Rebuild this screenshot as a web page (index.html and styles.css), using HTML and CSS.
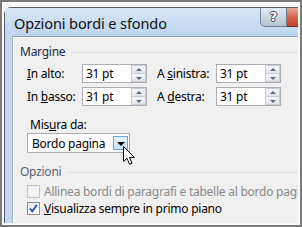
FILE: index.html
```html
<!DOCTYPE html>
<html>
<head>
<meta charset="utf-8">
<link rel="stylesheet" href="styles.css">
</head>
<body>
<div class="screen">
  <div class="clip">
    <div class="window">
      <div class="titlebar">
        <span class="title">Opzioni bordi e sfondo</span>
        <div class="caption-btns">
          <div class="btn-help">?</div>
          <div class="btn-close">x</div>
        </div>
      </div>
      <div class="client">
        <div class="group-head"><span>Margine</span><i class="rule"></i></div>
        <div class="margins">
          <label class="lbl"><u>I</u>n alto:</label>
          <div class="spin"><span class="val">31 pt</span><div class="spin-btns"><b class="up"></b><b class="down"></b></div></div>
          <label class="lbl lbl-right">A <u>s</u>inistra:</label>
          <div class="spin"><span class="val">31 pt</span><div class="spin-btns"><b class="up"></b><b class="down"></b></div></div>
          <label class="lbl">In <u>b</u>asso:</label>
          <div class="spin"><span class="val">31 pt</span><div class="spin-btns"><b class="up"></b><b class="down"></b></div></div>
          <label class="lbl lbl-right">A <u>d</u>estra:</label>
          <div class="spin"><span class="val">31 pt</span><div class="spin-btns"><b class="up"></b><b class="down"></b></div></div>
        </div>
        <div class="measure">
          <label class="measure-lbl">Mis<u>u</u>ra da:</label>
          <div class="select">
            <span class="val">Bordo pagina</span>
            <div class="drop"><b class="tri"></b></div>
            <svg class="cursor" width="13" height="20" viewBox="0 0 13 20">
              <path d="M0.5 0.5 L0.5 15.5 L4 12.2 L6.6 18.3 L9 17.3 L6.5 11.4 L11.3 11.4 Z" fill="#fff" stroke="#000" stroke-width="1" stroke-linejoin="miter"/>
            </svg>
          </div>
        </div>
        <div class="group-head group-opts"><span>Opzioni</span><i class="rule"></i></div>
        <div class="check disabled"><span class="box"></span><span class="ctext">Allinea bordi di paragrafi e tabelle al bordo pagina</span></div>
        <div class="check"><span class="box checked">
          <svg width="11" height="11" viewBox="0 0 11 11"><path d="M2 5.5 L4.3 8.3 L9 1.8" fill="none" stroke="#2a4fa8" stroke-width="1.8"/></svg>
        </span><span class="ctext"><u>V</u>isualizza sempre in primo piano</span></div>
      </div>
    </div>
  </div>
</div>
</body>
</html>
```
FILE: styles.css
```css
html, body {
  margin: 0;
  padding: 0;
}
body {
  width: 302px;
  height: 227px;
  overflow: hidden;
  font-family: "Noto Sans", "Open Sans", sans-serif;
  font-size: 12px;
  letter-spacing: -0.25px;
  color: #000;
}
.screen {
  box-sizing: border-box;
  width: 302px;
  height: 227px;
  border: 2px solid #7a7a7a;
  background: #fbfbfb;
  padding: 5px 2px 2px 2px;
}
.clip {
  width: 100%;
  height: 100%;
  overflow: hidden;
}
.window {
  width: 330px;
  height: 240px;
  box-sizing: border-box;
  border: 1px solid #565d66;
  border-top-left-radius: 7px;
  background: linear-gradient(to right, #c2d7ed, #d3e3f4 40%, #c4d9ef);
  padding: 0 0 0 7px;
}
.titlebar {
  height: 28px;
  display: flex;
  align-items: flex-start;
  margin-left: -7px;
  padding-left: 9px;
  background: linear-gradient(to bottom, #d9e7f6 0%, #cadff4 45%, #bed5ee 100%);
}
.title {
  font-size: 14.5px;
  line-height: 14px;
  margin-top: 8px;
  color: #101010;
  letter-spacing: -0.1px;
}
.caption-btns {
  margin-left: auto;
  display: flex;
  margin-right: -2px;
}
.btn-help {
  width: 27px;
  height: 19px;
  box-sizing: border-box;
  border: 1px solid #717e8c;
  border-top: none;
  border-bottom-left-radius: 5px;
  background: linear-gradient(to bottom, #e3e9f0 0%, #cdd7e2 50%, #b4c2d1 100%);
  color: #fff;
  font-family: "DejaVu Sans", sans-serif;
  font-weight: bold;
  font-size: 13px;
  line-height: 18px;
  letter-spacing: 0;
  text-align: center;
  text-shadow: 1px 0 #3c4650, -1px 0 #3c4650, 0 1px #3c4650, 0 -1px #3c4650;
}
.btn-close {
  width: 48px;
  height: 19px;
  box-sizing: border-box;
  border: 1px solid #6e2a22;
  border-top: none;
  border-left: none;
  background: linear-gradient(to bottom, #e8aa98 0%, #d86a55 45%, #c2402b 100%);
  color: #fff;
  font-family: "DejaVu Sans", sans-serif;
  font-weight: bold;
  font-size: 14px;
  line-height: 17px;
  letter-spacing: 0;
  padding-left: 18px;
  text-shadow: 1px 0 #4a1a14, -1px 0 #4a1a14, 0 1px #4a1a14, 0 -1px #4a1a14;
}
.client {
  height: 190px;
  border-top: 1px solid #8fa4bc;
  border-left: 1px solid #9fb3c9;
  background: #f0f0f0;
  box-shadow: inset 1px 1px 0 #ffffff;
  padding: 7px 0 0 7px;
}
.group-head {
  display: flex;
  align-items: center;
  height: 16px;
  line-height: 16px;
  color: #1c2a4a;
}
.group-head .rule {
  flex: 1;
  height: 1px;
  background: #dde2e8;
  margin-left: 6px;
}
.group-opts {
  color: #5a6170;
}
.margins {
  display: grid;
  grid-template-columns: 55px 65px 69px 65px;
  grid-auto-rows: 19px;
  row-gap: 4px;
  margin: 4px 0 0 7px;
  align-items: center;
}
.lbl {
  line-height: 16px;
  color: #000;
}
.lbl-right {
  padding-left: 10px;
}
.spin {
  height: 19px;
  box-sizing: border-box;
  border: 1px solid #abadb3;
  background: #fff;
  display: flex;
  align-items: center;
  padding-left: 3px;
}
.spin .val {
  flex: 1;
  line-height: 16px;
}
.spin-btns {
  width: 15px;
  height: 17px;
  display: flex;
  flex-direction: column;
}
.spin-btns b {
  flex: 1;
  box-sizing: border-box;
  border: 1px solid #c9ced6;
  background: linear-gradient(to bottom, #f4f6f8, #e2e6eb);
  position: relative;
}
.spin-btns b.up {
  border-bottom: none;
}
.spin-btns b::after {
  content: "";
  position: absolute;
  left: 4px;
  top: 2px;
  border-left: 3px solid transparent;
  border-right: 3px solid transparent;
}
.spin-btns b.up::after {
  border-bottom: 3px solid #5a6c86;
}
.spin-btns b.down::after {
  top: 3px;
  border-top: 3px solid #5a6c86;
}
.measure {
  margin: 11px 0 0 10px;
}
.measure-lbl {
  display: block;
  line-height: 16px;
}
.select {
  position: relative;
  width: 103px;
  height: 20px;
  box-sizing: border-box;
  border: 1px solid #abadb3;
  background: #fff;
  margin-left: -3px;
  display: flex;
  align-items: center;
  padding-left: 4px;
}
.select .val {
  flex: 1;
}
.drop {
  width: 15px;
  height: 14px;
  box-sizing: border-box;
  border: 1px solid #6fa6da;
  background: linear-gradient(to bottom, #e9f4fd, #c6e1f8);
  margin-right: 1px;
  display: flex;
  align-items: center;
  justify-content: center;
}
.tri {
  width: 0;
  height: 0;
  border-left: 4px solid transparent;
  border-right: 4px solid transparent;
  border-top: 4px solid #000;
  margin-top: 1px;
}
.cursor {
  position: absolute;
  left: 95px;
  top: 12px;
}
.group-opts {
  margin-top: 11px;
}
.check {
  display: flex;
  align-items: center;
  height: 17px;
  margin-left: 7px;
  white-space: nowrap;
}
.group-opts + .check {
  margin-top: 3px;
}
.box {
  width: 13px;
  height: 13px;
  box-sizing: border-box;
  border: 1px solid #8f8f8f;
  background: linear-gradient(135deg, #e6e6e6, #fdfdfd);
  margin-right: 4px;
  flex: none;
  display: flex;
  align-items: center;
  justify-content: center;
}
.disabled .box {
  border-color: #c4c4c4;
  background: #f4f4f4;
}
.disabled .ctext {
  color: #8a8a8a;
}
```
